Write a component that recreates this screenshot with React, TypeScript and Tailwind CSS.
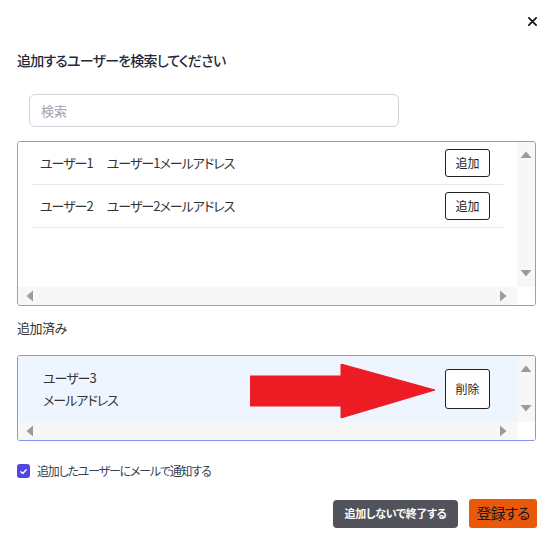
import React from "react";

const USERS = [
  { name: "ユーザー1", mail: "ユーザー1メールアドレス" },
  { name: "ユーザー2", mail: "ユーザー2メールアドレス" },
];

function Tri({ dir }: { dir: "up" | "down" | "left" | "right" }) {
  const pts = {
    up: "0.5,8 6,1.5 11.5,8",
    down: "0.5,3 6,9.5 11.5,3",
    left: "8,0.5 1.5,6 8,11.5",
    right: "3,0.5 9.5,6 3,11.5",
  }[dir];
  return (
    <svg width="12" height="12" viewBox="0 0 12 12" className="block">
      <polygon points={pts} fill="#9b9b9b" />
    </svg>
  );
}

function VScroll() {
  return (
    <div className="w-[18px] shrink-0 bg-[#f7f7f7] flex flex-col items-center justify-between pt-[8px] pb-[8px]">
      <Tri dir="up" />
      <Tri dir="down" />
    </div>
  );
}

function HScroll() {
  return (
    <div className="flex h-[18px] shrink-0">
      <div className="flex-1 bg-[#f7f7f7] flex items-center justify-between pl-[7px] pr-[8px]">
        <Tri dir="left" />
        <Tri dir="right" />
      </div>
      <div className="w-[18px] bg-white" />
    </div>
  );
}

export default function App() {
  return (
    <div
      className="w-[557px] h-[546px] bg-white px-[17px] flex flex-col text-[#333] [font-feature-settings:'palt']"
      style={{ fontFamily: '"Noto Sans CJK JP", "Noto Sans", sans-serif' }}
    >
      {/* 閉じる */}
      <div className="flex justify-end pt-[17px] pr-[3px]">
        <svg width="9" height="9" viewBox="0 0 10 10">
          <path d="M1 1 L9 9 M9 1 L1 9" stroke="#111" strokeWidth="1.9" strokeLinecap="round" />
        </svg>
      </div>

      <p className="mt-[24px] text-[14px] leading-[20px] font-medium tracking-[-0.8px] text-[#1f2937]">
        追加するユーザーを検索してください
      </p>

      <div className="mt-[24px] ml-[12px] w-[370px] h-[33px] border border-[#d1d5db] rounded-[6px] flex items-center px-[11px]">
        <span className="text-[13px] text-[#9ca3af]">検索</span>
      </div>

      {/* 検索結果 */}
      <div className="mt-[14px] w-[519px] h-[165px] border border-[#a0a0a0] rounded-[3px] flex flex-col overflow-hidden">
        <div className="flex flex-1">
          <div className="flex-1 bg-white pl-[13px] pr-[13px]">
            {USERS.map((u) => (
              <div key={u.name} className="flex items-center py-[7px] border-b border-[#e5e7eb] pl-[9px] pr-[14px]">
                <span className="text-[13px] tracking-[-1px] mr-[14px]">{u.name}</span>
                <span className="text-[13px] tracking-[-1px] flex-1">{u.mail}</span>
                <button className="w-[45px] h-[28px] border border-[#222] rounded-[3px] bg-white text-[12px] text-[#222]">
                  追加
                </button>
              </div>
            ))}
          </div>
          <VScroll />
        </div>
        <HScroll />
      </div>

      <p className="mt-[12px] text-[13px] leading-[20px] tracking-[-0.5px] text-[#333]">追加済み</p>

      {/* 追加済み */}
      <div className="mt-[17px] w-[519px] h-[86px] border border-[#8b93e8] rounded-[3px] flex flex-col overflow-hidden">
        <div className="flex flex-1">
          <div className="relative flex-1 bg-[#eef5ff] flex items-center pl-[25px] pr-[27px]">
            <div className="flex-1 text-[13px] leading-[22px] tracking-[-1px]">
              <p>ユーザー3</p>
              <p>メールアドレス</p>
            </div>
            <button className="w-[45px] h-[40px] border border-[#222] rounded-[3px] bg-white text-[12px] text-[#222]">
              削除
            </button>
            <svg className="absolute left-[232px] top-[8px]" width="186" height="55" viewBox="0 0 186 55">
              <polygon
                points="0,12 91,12 91,0 185,26 91,54 91,42 0,42"
                fill="#ed1c24"
                stroke="#ed1c24"
                strokeWidth="1"
                strokeLinejoin="round"
              />
            </svg>
          </div>
          <VScroll />
        </div>
        <HScroll />
      </div>

      {/* 通知 */}
      <label className="mt-[21px] flex items-center gap-[7px]">
        <span className="w-[13px] h-[14px] rounded-[3px] bg-[#4f46e5] flex items-center justify-center">
          <svg width="9" height="9" viewBox="0 0 10 10">
            <path d="M2 5.2 L4.2 7.2 L8 3" stroke="#fff" strokeWidth="1.6" fill="none" strokeLinecap="round" strokeLinejoin="round" />
          </svg>
        </span>
        <span className="text-[12px] tracking-[-1.2px] text-[#374151]">追加したユーザーにメールで通知する</span>
      </label>

      <div className="mt-[19px] flex justify-end items-center gap-[11px] pr-[3px]">
        <button className="w-[125px] h-[28px] rounded-[4px] bg-[#52525b] text-white text-[11px] font-bold tracking-[-0.3px]">
          追加しないで終了する
        </button>
        <button className="w-[68px] h-[29px] rounded-[3px] bg-[#ea580c] text-[#1a1a1a] text-[15px] tracking-[-1px]">
          登録する
        </button>
      </div>
    </div>
  );
}
